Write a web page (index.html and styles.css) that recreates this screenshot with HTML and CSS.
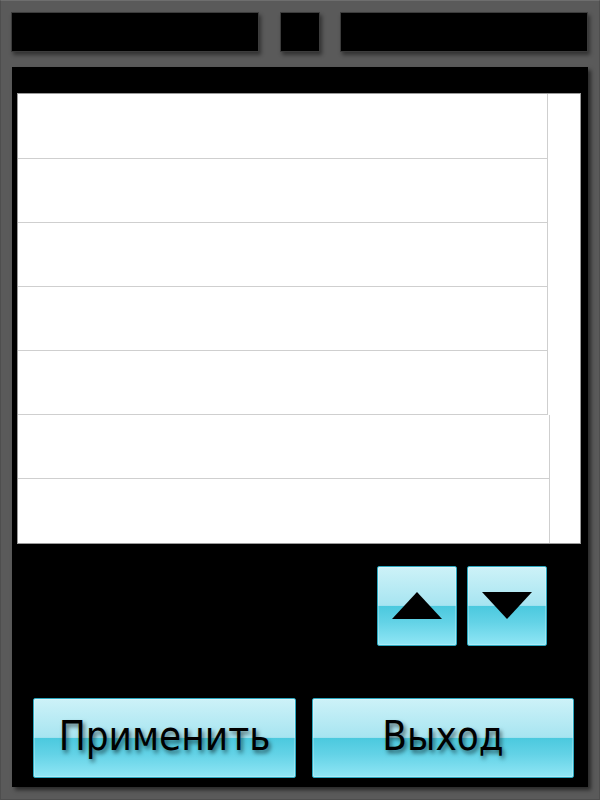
FILE: index.html
```html
<!DOCTYPE html>
<html lang="ru">
<head>
<meta charset="utf-8">
<title>Список</title>
<link rel="stylesheet" href="styles.css">
</head>
<body>
<div class="frame">
  <div class="top">
    <div class="bar bar-wide"></div>
    <div class="bar bar-small"></div>
    <div class="bar bar-wide bar-right"></div>
  </div>
  <div class="panel">
    <div class="list">
      <div class="rows">
        <div class="row row-first"></div>
        <div class="row"></div>
        <div class="row"></div>
        <div class="row"></div>
        <div class="row"></div>
        <div class="row row-wide"></div>
        <div class="row row-wide row-last"></div>
      </div>
    </div>
    <div class="arrows">
      <button class="btn arrow" aria-label="Вверх">
        <svg width="50" height="28" viewBox="0 0 50 28"><polygon points="0,27 25,0 50,27" fill="#000"/></svg>
      </button>
      <button class="btn arrow" aria-label="Вниз">
        <svg width="50" height="28" viewBox="0 0 50 28"><polygon points="0,0 50,0 25,27" fill="#000"/></svg>
      </button>
    </div>
    <div class="actions">
      <button class="btn action action-apply">Применить</button>
      <button class="btn action action-exit">Выход</button>
    </div>
  </div>
</div>
</body>
</html>
```
FILE: styles.css
```css
html, body {
  margin: 0;
  padding: 0;
}
body {
  background: #5a5a5a;
  width: 600px;
  height: 800px;
  overflow: hidden;
  font-family: "Liberation Sans", Arial, sans-serif;
}
.frame {
  box-sizing: border-box;
  width: 600px;
  height: 800px;
  border-top: 1px solid #6e6e6e;
  border-left: 1px solid #4e4e4e;
  border-right: 1px solid #4e4e4e;
  border-bottom: 1px solid #4e4e4e;
  padding: 11px 11px 0 10px;
}
.top {
  display: flex;
  height: 40px;
}
.bar {
  background: #000;
  border: 1px solid #3c3c3c;
  box-sizing: border-box;
  height: 40px;
  box-shadow: 2px 3px 4px rgba(0,0,0,0.45);
}
.bar-wide { width: 248px; }
.bar-small { width: 41px; margin: 0 20px 0 21px; }
.bar-right { width: 248px; }
.panel {
  margin-top: 15px;
  margin-left: 1px;
  width: 576px;
  height: 720px;
  background: #000;
  box-shadow: 3px 3px 4px rgba(0,0,0,0.55);
  display: flex;
  flex-direction: column;
  padding-top: 26px;
  box-sizing: border-box;
}
.list {
  margin-left: 5px;
  width: 564px;
  height: 451px;
  background: #fff;
  border: 1px solid #9a9a9a;
  box-sizing: border-box;
}
.rows {
  display: flex;
  flex-direction: column;
}
.row {
  width: 530px;
  height: 64px;
  border-right: 1px solid #cfcfcf;
  border-bottom: 1px solid #cfcfcf;
  box-sizing: border-box;
}
.row-first { height: 65px; }
.row-wide { width: 532px; }
.row-last { border-bottom: none; height: 64px; }
.arrows {
  display: flex;
  gap: 10px;
  justify-content: flex-end;
  margin-top: 22px;
  margin-right: 41px;
}
.btn {
  box-sizing: border-box;
  border: 1px solid #2aa7bf;
  border-radius: 2px;
  padding: 0;
  margin: 0;
  background: linear-gradient(to bottom, #cdf2f8 0%, #a8e5f1 48%, #9adfee 50%, #4bc9de 50%, #62d2e6 70%, #90e6f5 100%);
  box-shadow: inset 0 0 0 1px rgba(255,255,255,0.25);
  display: flex;
  align-items: center;
  justify-content: center;
}
.arrow {
  width: 80px;
  height: 80px;
}
.actions {
  display: flex;
  gap: 16px;
  margin-top: 52px;
  margin-left: 21px;
}
.action {
  height: 80px;
  font-family: "DejaVu Sans Condensed", "DejaVu Sans", sans-serif;
  font-stretch: condensed;
  font-size: 40px;
  color: #000;
  text-shadow: 2px 3px 4px rgba(0,0,0,0.55);
  padding-bottom: 4px;
}
.action-apply { width: 263px; }
.action-exit { width: 262px; }
```
